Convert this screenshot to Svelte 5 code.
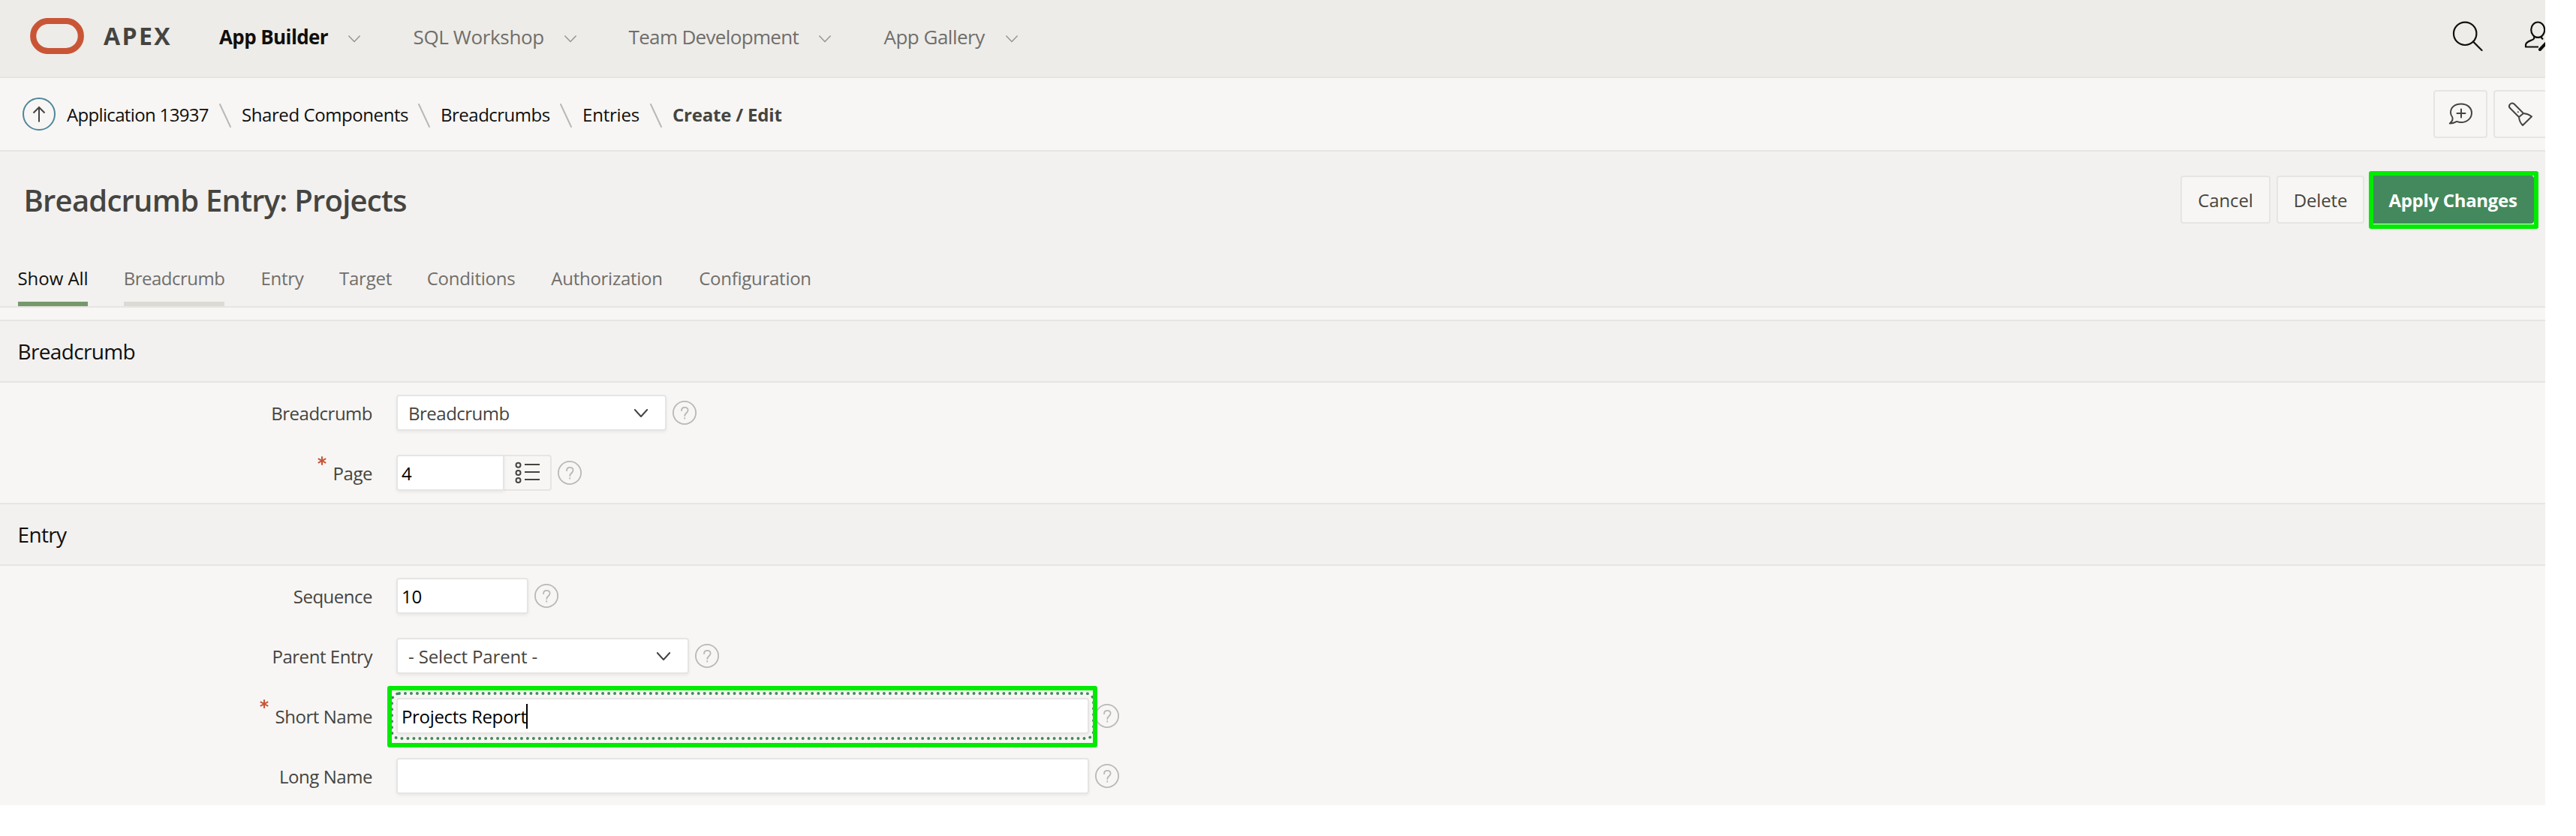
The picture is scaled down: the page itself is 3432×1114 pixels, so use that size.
<script>
  const nav = ['App Builder', 'SQL Workshop', 'Team Development', 'App Gallery'];
  const crumbs = ['Application 13937', 'Shared Components', 'Breadcrumbs', 'Entries', 'Create / Edit'];
  const tabs = ['Show All', 'Breadcrumb', 'Entry', 'Target', 'Conditions', 'Authorization', 'Configuration'];
  const sections = [
    {
      title: 'Breadcrumb',
      fields: [
        { label: 'Breadcrumb', kind: 'select', size: 'w-select', value: 'Breadcrumb' },
        { label: 'Page', kind: 'lov', size: 'w-page', value: '4', required: true }
      ]
    },
    {
      title: 'Entry',
      fields: [
        { label: 'Sequence', kind: 'text', size: 'w-seq', value: '10' },
        { label: 'Parent Entry', kind: 'select', size: 'w-parent', value: '- Select Parent -' },
        { label: 'Short Name', kind: 'text', size: 'w-wide', value: 'Projects Report', required: true, focused: true },
        { label: 'Long Name', kind: 'text', size: 'w-wide', value: '' }
      ]
    }
  ];
</script>

<div class="app">
  <header class="topbar">
    <svg class="logo" viewBox="0 0 72 48"><rect x="4.2" y="4" width="63.6" height="40" rx="20" /></svg>
    <span class="brand">APEX</span>
    <nav class="menu">
      {#each nav as item, i}
        <a class="menu-item" class:current={i === 0}>
          <span>{item}</span>
          <svg class="caret" viewBox="0 0 16 10"><path d="M.8 1 8 8.4 15.2 1" /></svg>
        </a>
      {/each}
    </nav>
    <svg class="search" viewBox="0 0 42 42"><circle cx="17.2" cy="16.8" r="15.200" /><path d="M28 27.500 39.500 39" /></svg>
    <svg class="user" viewBox="0 0 28 42">
      <ellipse cx="18.2" cy="11.7" rx="9" ry="10.200" />
      <path d="M13.200 20.500v2.600c-.6 1.400-2.400 2-4.400 2.800C4.500 27.500 2 29 2 32v2.500h17" />
      <path d="M23 20v2.200l2 2.300" />
      <path class="pen" d="M21 38 33 25.500" />
    </svg>
  </header>

  <div class="crumbbar">
    <svg class="up" viewBox="0 0 44 44">
      <circle cx="22" cy="22" r="21" />
      <path d="M22 32.500V13M14.500 20.500 22 13l7.500 7.500" />
    </svg>
    <ol class="crumbs">
      {#each crumbs as crumb, i}
        <li class="crumb" class:here={i === crumbs.length - 1}>
          <span>{crumb}</span>
          {#if i < crumbs.length - 1}
            <svg class="slash" viewBox="0 0 16 32"><path d="M1 1 15 31" /></svg>
          {/if}
        </li>
      {/each}
    </ol>
    <div class="tools">
      <button class="tool">
        <svg viewBox="0 1 32 32">
          <path d="M5.200 21C3.600 19 3 17 3 15 3 7.500 9 3.500 17 3.500S31 8.500 31 15.500 25 28 17 28c-2 0-4-.4-5.800-1.100C8.500 28.500 5.500 29.600 1.800 29.500 3.600 28 6.600 24.500 5.200 21Z" />
          <path d="M17 10.500v11M11.500 16h11" />
        </svg>
      </button>
      <button class="tool cut">
        <svg viewBox="0 0 32 32">
          <path d="M14 20 1.800 7.800C-.8 4.500 3.500-.3 7.300 2.300L20 15M14 20 20 15M14 20c.3 4.500 1.500 7.500 5 11L31 19.200C27.500 16.600 24.500 15.300 20 15" />
          <circle class="dot" cx="12.800" cy="13.200" r="1" />
        </svg>
      </button>
    </div>
  </div>

  <div class="titlearea">
    <div class="titlerow">
      <h1>Breadcrumb Entry: Projects</h1>
      <button class="btn cancel">Cancel</button>
      <button class="btn delete">Delete</button>
      <div class="apply-wrap"><button class="btn apply">Apply Changes</button></div>
    </div>
    <div class="tabs">
      {#each tabs as tab, i}
        <a class="tab" class:active={i === 0} class:hover={i === 1}><span>{tab}</span></a>
      {/each}
    </div>
  </div>

  <main>
    {#each sections as section}
      <section>
        <h2>{section.title}</h2>
        <div class="fields">
          {#each section.fields as f}
            <div class="field">
              <span class="label">
                {#if f.required}
                  <svg class="star" viewBox="0 0 12 12"><path d="M6 .3v11.400M.8 3.200l10.400 5.600M11.200 3.200.8 8.800" /></svg>
                {/if}
                <span>{f.label}</span>
              </span>
              <div class="control {f.size} {f.kind}" class:focused={f.focused}>
                <span class="value">{f.value}</span>
                {#if f.focused}<i class="cursor"></i>{/if}
                {#if f.kind === 'select'}
                  <svg class="arrow" viewBox="0 0 18 12"><path d="M.8 1 9 10 17.200 1" /></svg>
                {/if}
                {#if f.focused}<div class="callout"></div>{/if}
              </div>
              {#if f.kind === 'lov'}
                <button class="picker">
                  <svg viewBox="0 0 34 30">
                    <circle cx="4.500" cy="4.700" r="3" /><circle cx="4.500" cy="15" r="3" /><circle cx="4.500" cy="25" r="3" />
                    <path d="M13 4h20M13 14h20M13 24h20" />
                  </svg>
                </button>
              {/if}
              <svg class="help" viewBox="0 0 32 32">
                <circle cx="16" cy="16" r="15.100" />
                <path d="M12 13.200c0-2.700 1.800-4.400 4.300-4.400 2.600 0 4.300 1.700 4.300 4 0 3.200-4.300 3.800-4.300 7.200" />
                <path d="M16.200 22.900v.8" />
              </svg>
            </div>
          {/each}
        </div>
      </section>
    {/each}
  </main>
</div>

<style>
  :global(body) { background: #fff; }
  * { box-sizing: border-box; }
  svg { display: block; flex: none; fill: none; stroke: currentColor; stroke-width: 2; stroke-linecap: round; stroke-linejoin: round; }
  button { font: inherit; letter-spacing: inherit; padding: 0; margin: 0; }
  .app {
    width: 3391px;
    height: 1073px;
    overflow: hidden;
    background: #f7f6f4;
    color: #454440;
    font: 24px 'Open Sans', 'Noto Sans', sans-serif;
    letter-spacing: -0.33px;
    white-space: nowrap;
  }

  .topbar { display: flex; height: 104px; border-bottom: 2px solid #e6e5e3; background: #edece8; overflow: hidden; }
  .logo { width: 72px; height: 48px; margin: 24px 0 0 40px; color: #c95537; stroke-width: 8.2; }
  .brand { width: 154px; margin-left: 26px; font-size: 32px; font-weight: 700; line-height: 95px; letter-spacing: 2.4px; }
  .menu { flex: 1; display: grid; grid-template-columns: 258.5px 287px 340px 1fr; color: #706e6b; font-size: 26px; line-height: 98px; }
  .menu-item { display: flex; letter-spacing: -0.66px; }
  .menu-item:nth-child(2) { letter-spacing: -0.36px; }
  .menu-item:nth-child(4) { letter-spacing: -0.5px; }
  .current { color: #100f0e; font-weight: 700; letter-spacing: -0.6px; }
  .caret { width: 16px; height: 10px; margin: 47px 0 0 27px; color: #97958f; stroke-width: 1.5; }
  .menu-item:nth-child(4) .caret { margin-left: 28px; }
  .search { width: 42px; height: 42px; margin: 28px 0 0; color: #100f0e; stroke-width: 2.2; }
  .user { width: 28px; height: 42px; margin: 28px 0 0 54px; color: #100f0e; stroke-width: 2.2; stroke-linecap: butt; }
  .pen { stroke-width: 4; stroke-linecap: round; }

  .crumbbar { display: flex; height: 98px; border-bottom: 2px solid #e6e5e3; }
  .up { width: 44px; height: 44px; margin: 26px 0 0 30px; color: #454440; stroke-linecap: butt; stroke-linejoin: miter; }
  .up circle { stroke: #4f869b; }
  .crumbs { flex: 1; display: grid; grid-template-columns: 233px 265px 189px 120px 1fr; margin: 0 0 0 15px; padding: 0; list-style: none; color: #100f0e; line-height: 98px; }
  .crumb { display: flex; letter-spacing: -0.42px; }
  .crumb:nth-child(1) { letter-spacing: -0.66px; }
  .crumb:nth-child(3) { letter-spacing: -0.5px; }
  .crumb:nth-child(4) { letter-spacing: -0.2px; }
  .crumb.here { color: #454440; font-weight: 700; letter-spacing: -0.2px; }
  .slash { width: 16px; height: 32px; margin: 34px 14px 0 auto; color: #b9b8b5; }
  .tools { display: flex; gap: 8px; padding-top: 16px; }
  .tool { display: flex; align-items: center; justify-content: center; width: 72px; height: 64px; border: 2px solid #e6e5e3; border-radius: 4px; background: #f7f6f4; color: #454440; }
  .tool svg { width: 32px; height: 32px; overflow: visible; }
  .tool .dot { fill: currentColor; stroke: none; }
  .cut { width: 69px; border-right: 0; border-radius: 4px 0 0 4px; justify-content: flex-start; padding-left: 18px; }

  .titlearea { height: 208px; padding-top: 32px; border-bottom: 2px solid #e6e5e3; background: #f2f1ef; }
  .titlerow { display: flex; gap: 8px; height: 64px; padding-right: 15px; }
  h1 { flex: 1; margin: 0; padding-left: 31.5px; font-size: 40px; font-weight: 600; line-height: 65px; letter-spacing: -0.76px; }
  .btn { display: block; height: 64px; border: 2px solid #e6e5e3; border-radius: 4px; background: #f7f6f4; color: #454440; line-height: 61px; text-align: center; letter-spacing: -0.15px; }
  .cancel { width: 120px; }
  .delete { width: 117px; }
  .apply-wrap { position: relative; width: 218px; }
  .apply { width: 218px; padding-left: 2px; border-color: #43895d; background: #43895d; color: #fff; font-weight: 700; letter-spacing: -0.31px; }
  .apply-wrap::after { content: ''; position: absolute; inset: -6px -6px -7px -2px; border: 6px solid #00eb00; border-radius: 3px; box-shadow: inset 0 -1px #e9f7ea; }
  .tabs { display: grid; grid-template-columns: 93px 134px 58px 68px 117px 149px 150px; gap: 48px; margin: 35px 0 0 24px; color: #706e6b; line-height: 75px; }
  .tab { display: flex; justify-content: center; height: 75px; letter-spacing: -0.26px; }
  .tab.active { color: #100f0e; box-shadow: inset 0 -6px #76996c; letter-spacing: -0.05px; }
  .tab.hover { box-shadow: inset 0 -6px #dbdbd4; letter-spacing: -0.5px; }

  main { padding-top: 16px; }
  h2 { height: 84px; margin: 0; padding-left: 23.5px; border: solid #e6e5e3; border-width: 2px 0; background: #f2f1ef; color: #100f0e; font-size: 28px; font-weight: 400; line-height: 80px; letter-spacing: -0.65px; }
  .fields { display: grid; gap: 32px; padding: 16px 0; }
  .field { display: flex; height: 48px; }
  .label { display: flex; justify-content: flex-end; width: 496px; margin-right: 32px; line-height: 49px; letter-spacing: -0.45px; }
  .field:first-child .label { letter-spacing: -0.5px; }
  .star { width: 12px; height: 12px; margin: 2px 8.5px 0 0; color: #c95537; stroke-width: 2.1; stroke-linecap: butt; }
  .control { position: relative; display: flex; height: 48px; border: 2px solid #e6e5e3; border-radius: 4px; background: #fff; color: #000; line-height: 45px; padding-left: 5px; box-shadow: 0 2px 4px rgba(0, 0, 0, 0.06); }
  .select { padding-left: 14px; color: #454440; letter-spacing: -0.15px; }
  .w-select { width: 360px; letter-spacing: -0.5px; }
  .w-page { width: 144px; border-radius: 4px 0 0 4px; }
  .w-seq { width: 176px; }
  .w-parent { width: 390px; }
  .w-wide { width: 923px; }
  .arrow { width: 18px; height: 12px; margin: 17px 23px 0 auto; color: #454440; }
  .focused { outline: 4px dotted #43895d; outline-offset: 4px; }
  .cursor { width: 2px; height: 33px; margin: 6px 0 0 -1px; background: #000; }
  .callout { position: absolute; z-index: 2; inset: -18px -12.5px -20px -14px; border: 6px solid #00eb00; border-radius: 3px; }
  .picker { display: flex; align-items: center; justify-content: center; width: 63px; height: 48px; border: 2px solid #e6e5e3; border-left: 0; border-radius: 0 4px 4px 0; background: #f7f6f4; color: #454440; }
  .picker svg { width: 34px; height: 30px; stroke-linecap: butt; }
  .help { width: 32px; height: 32px; margin: 8px 0 0 8px; color: #b9b8b5; stroke-width: 1.8; }
</style>
